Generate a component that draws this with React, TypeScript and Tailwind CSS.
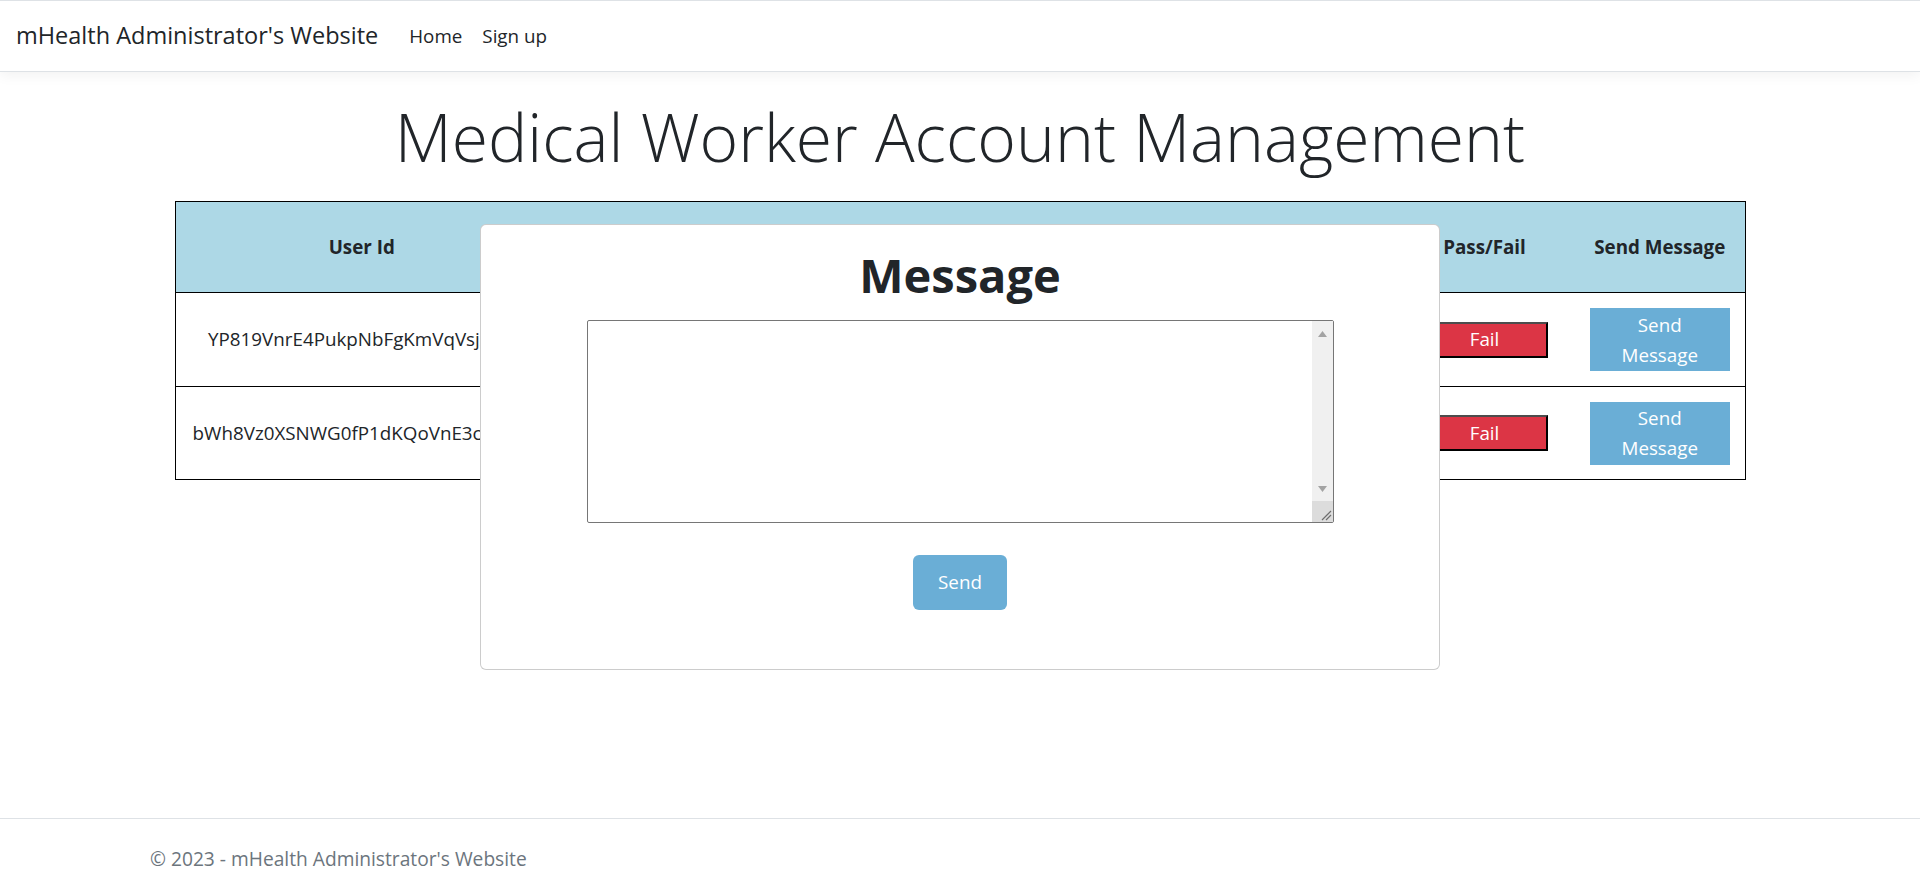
import React, { useState } from "react";

const rows = [
    { id: "YP819VnrE4PukpNbFgKmVqVsjx2Ti", name: "", score: "", status: "Fail" },
    { id: "bWh8Vz0XSNWG0fP1dKQoVnE3cR7aLt", name: "", score: "", status: "Fail" },
];

// fake classic scrollbar + resizer drawn over the textarea edge
const ScrollBar: React.FC<{}> = () => <div className="absolute top-[1px] right-[1px] bottom-[1px] w-[21px] bg-[#f0f0f0] flex flex-col items-center">
    <svg width="9" height="6" viewBox="0 0 9 6" className="mt-[10px]"><path d="M4.5 0 L9 6 L0 6 Z" fill="#a3a3a3" /></svg>
    <div className="flex-1" />
    <svg width="9" height="6" viewBox="0 0 9 6" className="mb-[30px]"><path d="M0 0 L9 0 L4.5 6 Z" fill="#a3a3a3" /></svg>
    <div className="absolute bottom-0 left-0 w-[21px] h-[21px] bg-[#dcdcdc]">
        <svg width="21" height="21" viewBox="0 0 21 21">
            <path d="M19 10 L10 19 M19 14 L14 19" stroke="#6e6e6e" strokeWidth="1.2" />
        </svg>
    </div>
</div>

const App: React.FC<{}> = () => {
    const [text, setText] = useState("")

    return <div className="min-h-screen flex flex-col bg-white text-[#212529] font-['Open_Sans','Noto_Sans',sans-serif]">
        <header className="h-[72px] shrink-0 border-t border-b border-[#dee2e6] shadow-[0_4px_12px_rgba(0,0,0,0.05)] flex items-center pl-[16px]">
            <a className="text-[23.5px] leading-none mr-[21px] text-[#212529]">mHealth Administrator's Website</a>
            <nav className="flex text-[18.8px] leading-none">
                <a className="px-[10px] text-[#212529]">Home</a>
                <a className="px-[10px] text-[#212529]">Sign up</a>
            </nav>
        </header>

        <main className="flex-1">
            <h1 className="text-center font-light text-[66px] leading-[84px] mt-[22px] mb-[23px]">Medical Worker Account Management</h1>

            <div className="relative w-[1570px] mx-auto">
                <table className="w-full table-fixed border-collapse border border-black text-[18.8px]">
                    <colgroup>
                        <col className="w-[372px]" />
                        <col className="w-[424px]" />
                        <col className="w-[423px]" />
                        <col className="w-[180px]" />
                        <col className="w-[171px]" />
                    </colgroup>
                    <thead>
                        <tr className="h-[91px] bg-[#add8e6] border-b border-black">
                            <th className="font-bold">User Id</th>
                            <th className="font-bold">Name</th>
                            <th className="font-bold">Score</th>
                            <th className="font-bold">Pass/Fail</th>
                            <th className="font-bold">Send Message</th>
                        </tr>
                    </thead>
                    <tbody>
                        {rows.map((r, i) => <tr key={i} className={(i === 0 ? "h-[94px]" : "h-[93px]") + " border-b border-black"}>
                            <td className="text-center whitespace-nowrap overflow-hidden">{r.id}</td>
                            <td className="text-center">{r.name}</td>
                            <td className="text-center">{r.score}</td>
                            <td className="text-center">
                                <button className="w-[126px] h-[36px] bg-[#dc3545] text-white border-2 border-t-[#4d4d4d] border-l-[#4d4d4d] border-r-black border-b-black leading-none">{r.status}</button>
                            </td>
                            <td className="text-center">
                                <button className="w-[140px] h-[63px] bg-[#6aaed6] text-white leading-[30px] px-[16px]">Send Message</button>
                            </td>
                        </tr>)}
                    </tbody>
                </table>

                <div className="absolute left-[305px] top-[23px] w-[960px] h-[446px] bg-white border border-black/20 rounded-[6px] flex flex-col items-center">
                    <h2 className="font-bold text-[47px] leading-[56px] mt-[22px] mb-[17px]">Message</h2>
                    <div className="relative w-[747px] h-[203px]">
                        <textarea
                            value={text}
                            onChange={e => setText(e.target.value)}
                            className="w-full h-full border border-[#767676] rounded-[2px] overflow-hidden resize-none outline-none p-[2px] pr-[24px] block"
                        />
                        <ScrollBar />
                    </div>
                    <button className="mt-[32px] w-[94px] h-[55px] rounded-[6px] bg-[#6aaed6] text-white text-[18.8px]">Send</button>
                </div>
            </div>
        </main>

        <footer className="h-[73px] shrink-0 border-t border-[#dee2e6] flex items-center pt-[8px]">
            <div className="w-[1650px] mx-auto px-[15px] text-[19.2px] text-[#6c757d]">© 2023 - mHealth Administrator's Website</div>
        </footer>
    </div>
}
export default App;
